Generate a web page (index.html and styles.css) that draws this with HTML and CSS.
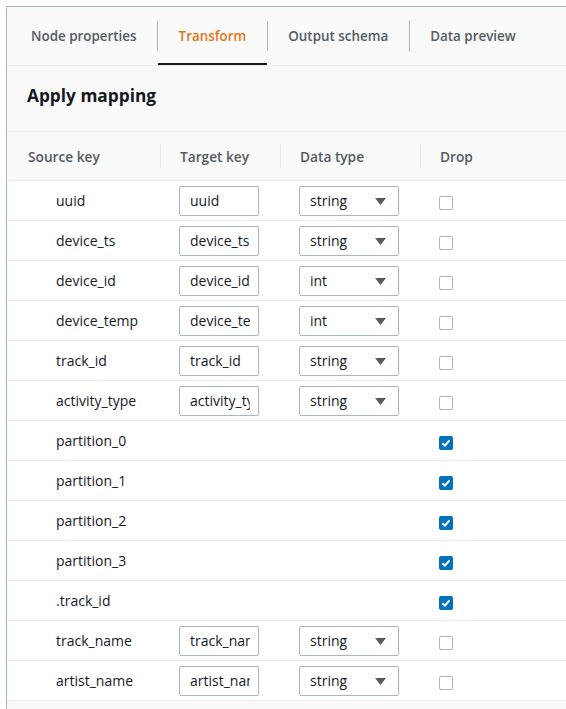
FILE: index.html
```html
<!DOCTYPE html>
<html>
<head>
<meta charset="utf-8">
<link rel="stylesheet" href="styles.css">
</head>
<body>
<div class="page">
  <div class="panel">
    <div class="tabs">
      <div class="tab">Node properties</div>
      <div class="tab-sep"></div>
      <div class="tab active">Transform</div>
      <div class="tab-sep"></div>
      <div class="tab">Output schema</div>
      <div class="tab-sep"></div>
      <div class="tab">Data preview</div>
    </div>
    <div class="section-header"><h2 class="title">Apply mapping</h2></div>
    <div class="table">
      <div class="row head">
        <div class="th first">Source key</div>
        <div class="th">Target key</div>
        <div class="th">Data type</div>
        <div class="th">Drop</div>
      </div>

      <div class="row">
        <div class="cell src">uuid</div>
        <div class="cell"><input class="text-input" type="text" value="uuid" readonly></div>
        <div class="cell"><div class="select"><span>string</span><svg class="caret" width="11" height="7" viewBox="0 0 11 7"><polygon points="0,0 11,0 5.5,7" fill="#545b64"/></svg></div></div>
        <div class="cell"><span class="checkbox"></span></div>
      </div>
      <div class="row">
        <div class="cell src">device_ts</div>
        <div class="cell"><input class="text-input" type="text" value="device_ts" readonly></div>
        <div class="cell"><div class="select"><span>string</span><svg class="caret" width="11" height="7" viewBox="0 0 11 7"><polygon points="0,0 11,0 5.5,7" fill="#545b64"/></svg></div></div>
        <div class="cell"><span class="checkbox"></span></div>
      </div>
      <div class="row">
        <div class="cell src">device_id</div>
        <div class="cell"><input class="text-input" type="text" value="device_id" readonly></div>
        <div class="cell"><div class="select"><span>int</span><svg class="caret" width="11" height="7" viewBox="0 0 11 7"><polygon points="0,0 11,0 5.5,7" fill="#545b64"/></svg></div></div>
        <div class="cell"><span class="checkbox"></span></div>
      </div>
      <div class="row">
        <div class="cell src">device_temp</div>
        <div class="cell"><input class="text-input" type="text" value="device_temp" readonly></div>
        <div class="cell"><div class="select"><span>int</span><svg class="caret" width="11" height="7" viewBox="0 0 11 7"><polygon points="0,0 11,0 5.5,7" fill="#545b64"/></svg></div></div>
        <div class="cell"><span class="checkbox"></span></div>
      </div>
      <div class="row">
        <div class="cell src">track_id</div>
        <div class="cell"><input class="text-input" type="text" value="track_id" readonly></div>
        <div class="cell"><div class="select"><span>string</span><svg class="caret" width="11" height="7" viewBox="0 0 11 7"><polygon points="0,0 11,0 5.5,7" fill="#545b64"/></svg></div></div>
        <div class="cell"><span class="checkbox"></span></div>
      </div>
      <div class="row">
        <div class="cell src">activity_type</div>
        <div class="cell"><input class="text-input" type="text" value="activity_type" readonly></div>
        <div class="cell"><div class="select"><span>string</span><svg class="caret" width="11" height="7" viewBox="0 0 11 7"><polygon points="0,0 11,0 5.5,7" fill="#545b64"/></svg></div></div>
        <div class="cell"><span class="checkbox"></span></div>
      </div>
      <div class="row">
        <div class="cell src">partition_0</div>
        <div class="cell"></div>
        <div class="cell"></div>
        <div class="cell"><span class="checkbox checked"><svg width="14" height="14" viewBox="0 0 14 14"><polyline points="3.5,7.2 6,9.6 10.5,4.4" fill="none" stroke="#fff" stroke-width="2"/></svg></span></div>
      </div>
      <div class="row">
        <div class="cell src">partition_1</div>
        <div class="cell"></div>
        <div class="cell"></div>
        <div class="cell"><span class="checkbox checked"><svg width="14" height="14" viewBox="0 0 14 14"><polyline points="3.5,7.2 6,9.6 10.5,4.4" fill="none" stroke="#fff" stroke-width="2"/></svg></span></div>
      </div>
      <div class="row">
        <div class="cell src">partition_2</div>
        <div class="cell"></div>
        <div class="cell"></div>
        <div class="cell"><span class="checkbox checked"><svg width="14" height="14" viewBox="0 0 14 14"><polyline points="3.5,7.2 6,9.6 10.5,4.4" fill="none" stroke="#fff" stroke-width="2"/></svg></span></div>
      </div>
      <div class="row">
        <div class="cell src">partition_3</div>
        <div class="cell"></div>
        <div class="cell"></div>
        <div class="cell"><span class="checkbox checked"><svg width="14" height="14" viewBox="0 0 14 14"><polyline points="3.5,7.2 6,9.6 10.5,4.4" fill="none" stroke="#fff" stroke-width="2"/></svg></span></div>
      </div>
      <div class="row">
        <div class="cell src">.track_id</div>
        <div class="cell"></div>
        <div class="cell"></div>
        <div class="cell"><span class="checkbox checked"><svg width="14" height="14" viewBox="0 0 14 14"><polyline points="3.5,7.2 6,9.6 10.5,4.4" fill="none" stroke="#fff" stroke-width="2"/></svg></span></div>
      </div>
      <div class="row">
        <div class="cell src">track_name</div>
        <div class="cell"><input class="text-input" type="text" value="track_name" readonly></div>
        <div class="cell"><div class="select"><span>string</span><svg class="caret" width="11" height="7" viewBox="0 0 11 7"><polygon points="0,0 11,0 5.5,7" fill="#545b64"/></svg></div></div>
        <div class="cell"><span class="checkbox"></span></div>
      </div>
      <div class="row">
        <div class="cell src">artist_name</div>
        <div class="cell"><input class="text-input" type="text" value="artist_name" readonly></div>
        <div class="cell"><div class="select"><span>string</span><svg class="caret" width="11" height="7" viewBox="0 0 11 7"><polygon points="0,0 11,0 5.5,7" fill="#545b64"/></svg></div></div>
        <div class="cell"><span class="checkbox"></span></div>
      </div>
    </div>
  </div>
</div>
</body>
</html>
```
FILE: styles.css
```css
* { box-sizing: border-box; }
html, body { margin: 0; padding: 0; background: #ffffff; }
body {
  font-family: "Open Sans", "Noto Sans", sans-serif;
  font-size: 14px;
  color: #16191f;
  width: 566px;
  height: 709px;
  overflow: hidden;
}
.page {
  padding: 6px 0 0 6px;
  height: 709px;
}
.panel {
  background: #fafafa;
  border-top: 1px solid #aab7b8;
  border-left: 1px solid #aab7b8;
  height: 100%;
}
.tabs {
  display: flex;
  align-items: center;
  height: 59px;
  padding: 0 0 0 3px;
  border-bottom: 1px solid #eaeded;
}
.tab {
  height: 58px;
  display: flex;
  align-items: center;
  padding: 0 20.5px;
  font-size: 13.4px;
  font-weight: 600;
  color: #545b64;
  white-space: nowrap;
}
.tab:first-child { padding-left: 21px; }
.tab.active {
  color: #ec7211;
  box-shadow: inset 0 -2px 0 #16191f;
}
.tab-sep {
  width: 1px;
  height: 30px;
  background: #aab7b8;
  flex: none;
}
.section-header {
  padding: 16px 20px 22px 20px;
  border-bottom: 1px solid #eaeded;
}
.title {
  margin: 0;
  font-size: 17.3px;
  line-height: 27px;
  font-weight: 700;
  color: #16191f;
}
.row {
  display: grid;
  grid-template-columns: 153px 120px 140px 1fr;
  height: 40px;
  border-bottom: 1px solid #eaeded;
  background: #ffffff;
}
.row.head {
  height: 49px;
  background: #fafafa;
}
.th {
  display: flex;
  align-items: center;
  padding-left: 20px;
  font-size: 13.7px;
  font-weight: 600;
  color: #545b64;
  background: linear-gradient(#eaeded, #eaeded) left center / 1px 24px no-repeat;
}
.th.first { background: none; padding-left: 21px; }
.cell {
  display: flex;
  align-items: center;
  padding-left: 19px;
}
.cell.src { padding-left: 49px; }
.text-input {
  width: 80px;
  height: 30px;
  border: 1px solid #aab7b8;
  border-radius: 2px;
  padding: 0 8px 0 10px;
  font-family: inherit;
  font-size: 14px;
  color: #16191f;
  background: #ffffff;
  outline: none;
}
.select {
  width: 100px;
  height: 30px;
  border: 1px solid #aab7b8;
  border-radius: 2px;
  background: #ffffff;
  display: flex;
  align-items: center;
  justify-content: space-between;
  padding: 0 12px 0 10px;
}
.caret { display: block; margin-top: 1px; }
.checkbox {
  width: 14px;
  height: 14px;
  border: 1px solid #aab7b8;
  border-radius: 2px;
  background: #ffffff;
  margin-top: 5px;
  display: block;
}
.checkbox.checked {
  background: #0073bb;
  border-color: #0073bb;
}
.checkbox.checked svg { display: block; margin: -1px 0 0 -1px; }
```
